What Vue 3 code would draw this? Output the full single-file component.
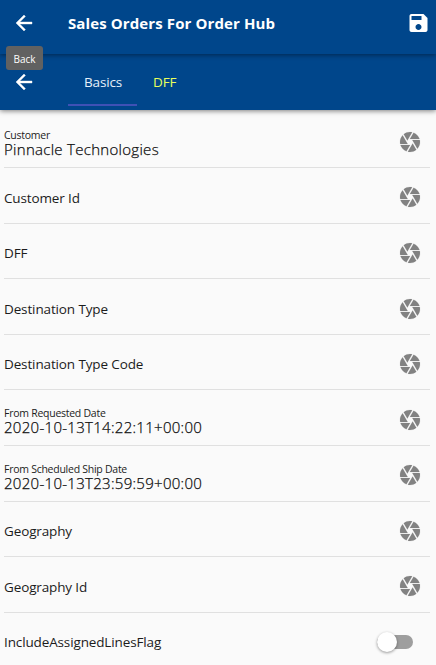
<script setup>
import { ref } from 'vue'

const fields = [
  { label: 'Customer', value: 'Pinnacle Technologies', kind: 'name' },
  { label: 'Customer Id' },
  { label: 'DFF' },
  { label: 'Destination Type' },
  { label: 'Destination Type Code' },
  { label: 'From Requested Date', value: '2020-10-13T14:22:11+00:00', kind: 'date' },
  { label: 'From Scheduled Ship Date', value: '2020-10-13T23:59:59+00:00', kind: 'date' },
  { label: 'Geography' },
  { label: 'Geography Id' },
]
const tabs = ['Basics', 'DFF']
const active = ref('Basics')
const included = ref(false)
</script>

<template>
  <div class="screen">
    <header class="bar title-bar">
      <button class="icon-btn back" aria-label="Back">
        <svg viewBox="0 0 24 24"><path d="M20 11H7.83l5.59-5.59L12 4l-8 8 8 8 1.41-1.41L7.83 13H20v-2z" /></svg>
        <span class="tooltip">Back</span>
      </button>
      <h1>Sales Orders For Order Hub</h1>
      <button class="icon-btn save" aria-label="Save">
        <svg viewBox="0 0 24 24"><path d="M17 3H5c-1.11 0-2 .9-2 2v14c0 1.1.89 2 2 2h14c1.1 0 2-.9 2-2V7l-4-4zm-5 16c-1.66 0-3-1.34-3-3s1.34-3 3-3 3 1.34 3 3-1.34 3-3 3zm3-10H5V5h10v4z" /></svg>
      </button>
    </header>
    <nav class="bar tab-bar">
      <button class="icon-btn back" aria-label="Back">
        <svg viewBox="0 0 24 24"><path d="M20 11H7.83l5.59-5.59L12 4l-8 8 8 8 1.41-1.41L7.83 13H20v-2z" /></svg>
      </button>
      <div class="tabs">
        <button v-for="t in tabs" :key="t" class="tab" :class="{ active: active === t }" @click="active = t">{{ t }}</button>
      </div>
    </nav>
    <main>
      <div v-for="f in fields" :key="f.label" class="row">
        <div class="text">
          <template v-if="f.value">
            <span class="caption">{{ f.label }}</span>
            <span class="value" :class="f.kind">{{ f.value }}</span>
          </template>
          <span v-else class="label">{{ f.label }}</span>
        </div>
        <svg class="aperture" viewBox="0 0 24 24"><path d="M9.4 10.5l4.77-8.26C13.47 2.09 12.75 2 12 2c-2.4 0-4.6.85-6.32 2.25l3.66 6.35.06-.1zM21.54 9c-.92-2.92-3.15-5.26-6-6.34L11.88 9h9.66zm.26 1h-7.49l.29.5 4.76 8.25C21 16.97 22 14.61 22 12c0-.69-.07-1.35-.2-2zM8.54 12l-3.9-6.75C3.01 7.03 2 9.39 2 12c0 .69.07 1.35.2 2h7.49l-1.15-2zm-6.08 3c.92 2.92 3.15 5.26 6 6.34L12.12 15H2.46zm11.27 0l-3.9 6.76c.7.15 1.42.24 2.17.24 2.4 0 4.6-.85 6.32-2.25l-3.66-6.35-.93 1.6z" /></svg>
      </div>
      <div class="row last">
        <div class="text"><span class="label flag">IncludeAssignedLinesFlag</span></div>
        <button class="switch" :class="{ on: included }" role="switch" :aria-checked="included" @click="included = !included"><span class="thumb"></span></button>
      </div>
    </main>
  </div>
</template>

<style>
body {
  background: #fafafa;
  overflow: hidden;
}
</style>

<style scoped>
.screen {
  height: 665px;
  overflow: hidden;
  background: #fafafa;
  font-family: 'Open Sans', 'Noto Sans', sans-serif;
  color: #1c1c1c;
}
button {
  border: 0;
  padding: 0;
  background: none;
  font: inherit;
  color: inherit;
}
svg {
  display: block;
  fill: currentColor;
}
.bar {
  position: relative;
  display: flex;
  align-items: center;
  box-sizing: border-box;
  background: #00468b;
  color: #fff;
}
.title-bar {
  z-index: 2;
  height: 54px;
  padding: 0 6px 8px 12px;
  box-shadow: 0 1px 5px rgba(0, 0, 0, 0.45);
}
.tab-bar {
  z-index: 1;
  height: 56px;
  padding-left: 12px;
  box-shadow: 0 1px 5px rgba(0, 0, 0, 0.5);
}
.icon-btn {
  position: relative;
  flex: none;
  width: 24px;
  height: 24px;
}
.back svg {
  width: 24px;
  height: 24px;
  stroke: currentColor;
  stroke-width: 0.4;
}
.save {
  margin-left: auto;
}
.save svg {
  width: 25px;
  height: 24px;
  margin-top: -1px;
}
.tooltip {
  position: absolute;
  left: -6px;
  top: 35px;
  width: 37px;
  height: 24px;
  border-radius: 3px;
  background: #616161;
  font-size: 10px;
  line-height: 27px;
  text-align: center;
}
h1 {
  margin: 0 0 0 32px;
  font-size: 15px;
  font-weight: 700;
  line-height: 24px;
  letter-spacing: 0.11px;
  white-space: nowrap;
}
.tabs {
  display: flex;
  height: 52px;
  margin-left: 32px;
  align-self: flex-start;
}
.tab {
  box-sizing: border-box;
  height: 52px;
  padding: 5px 16px 0;
  border-bottom: 2px solid transparent;
  font-size: 13.5px;
  letter-spacing: -0.15px;
  color: #e9ff5c;
}
.tab.active {
  width: 69px;
  border-bottom-color: #3f51b5;
  color: #e6f0fa;
}
main {
  padding: 2.45px 6px 0 4px;
}
.row {
  display: flex;
  align-items: center;
  justify-content: space-between;
  box-sizing: border-box;
  height: 55.6px;
  padding: 4px 8px 0 0;
  border-bottom: 1px solid #e0e0e0;
}
.row.last {
  border-bottom: 0;
  padding: 2px 17px 0 0;
}
.text {
  display: flex;
  flex-direction: column;
  white-space: nowrap;
}
.label {
  padding-top: 0.5px;
  font-size: 13.5px;
  line-height: 20px;
  letter-spacing: -0.13px;
}
.caption {
  padding-top: 1.5px;
  font-size: 10.5px;
  line-height: 14px;
  letter-spacing: -0.26px;
}
.value {
  font-size: 15px;
  line-height: 15px;
  font-weight: 300;
  color: #000;
  -webkit-text-stroke: 0.25px #222;
}
.name {
  letter-spacing: 0.29px;
}
.date {
  letter-spacing: 0.29px;
}
.aperture {
  width: 24px;
  height: 24px;
  color: #828282;
  stroke: currentColor;
  stroke-width: 0.12;
}
.switch {
  position: relative;
  width: 36px;
  height: 14px;
  border-radius: 7px;
  background: #9e9e9e;
}
.thumb {
  position: absolute;
  left: 0;
  top: -3px;
  width: 20px;
  height: 20px;
  border-radius: 50%;
  background: #fff;
  box-shadow: 0 1px 3px rgba(0, 0, 0, 0.4);
}
.switch.on .thumb {
  left: 16px;
}
</style>
